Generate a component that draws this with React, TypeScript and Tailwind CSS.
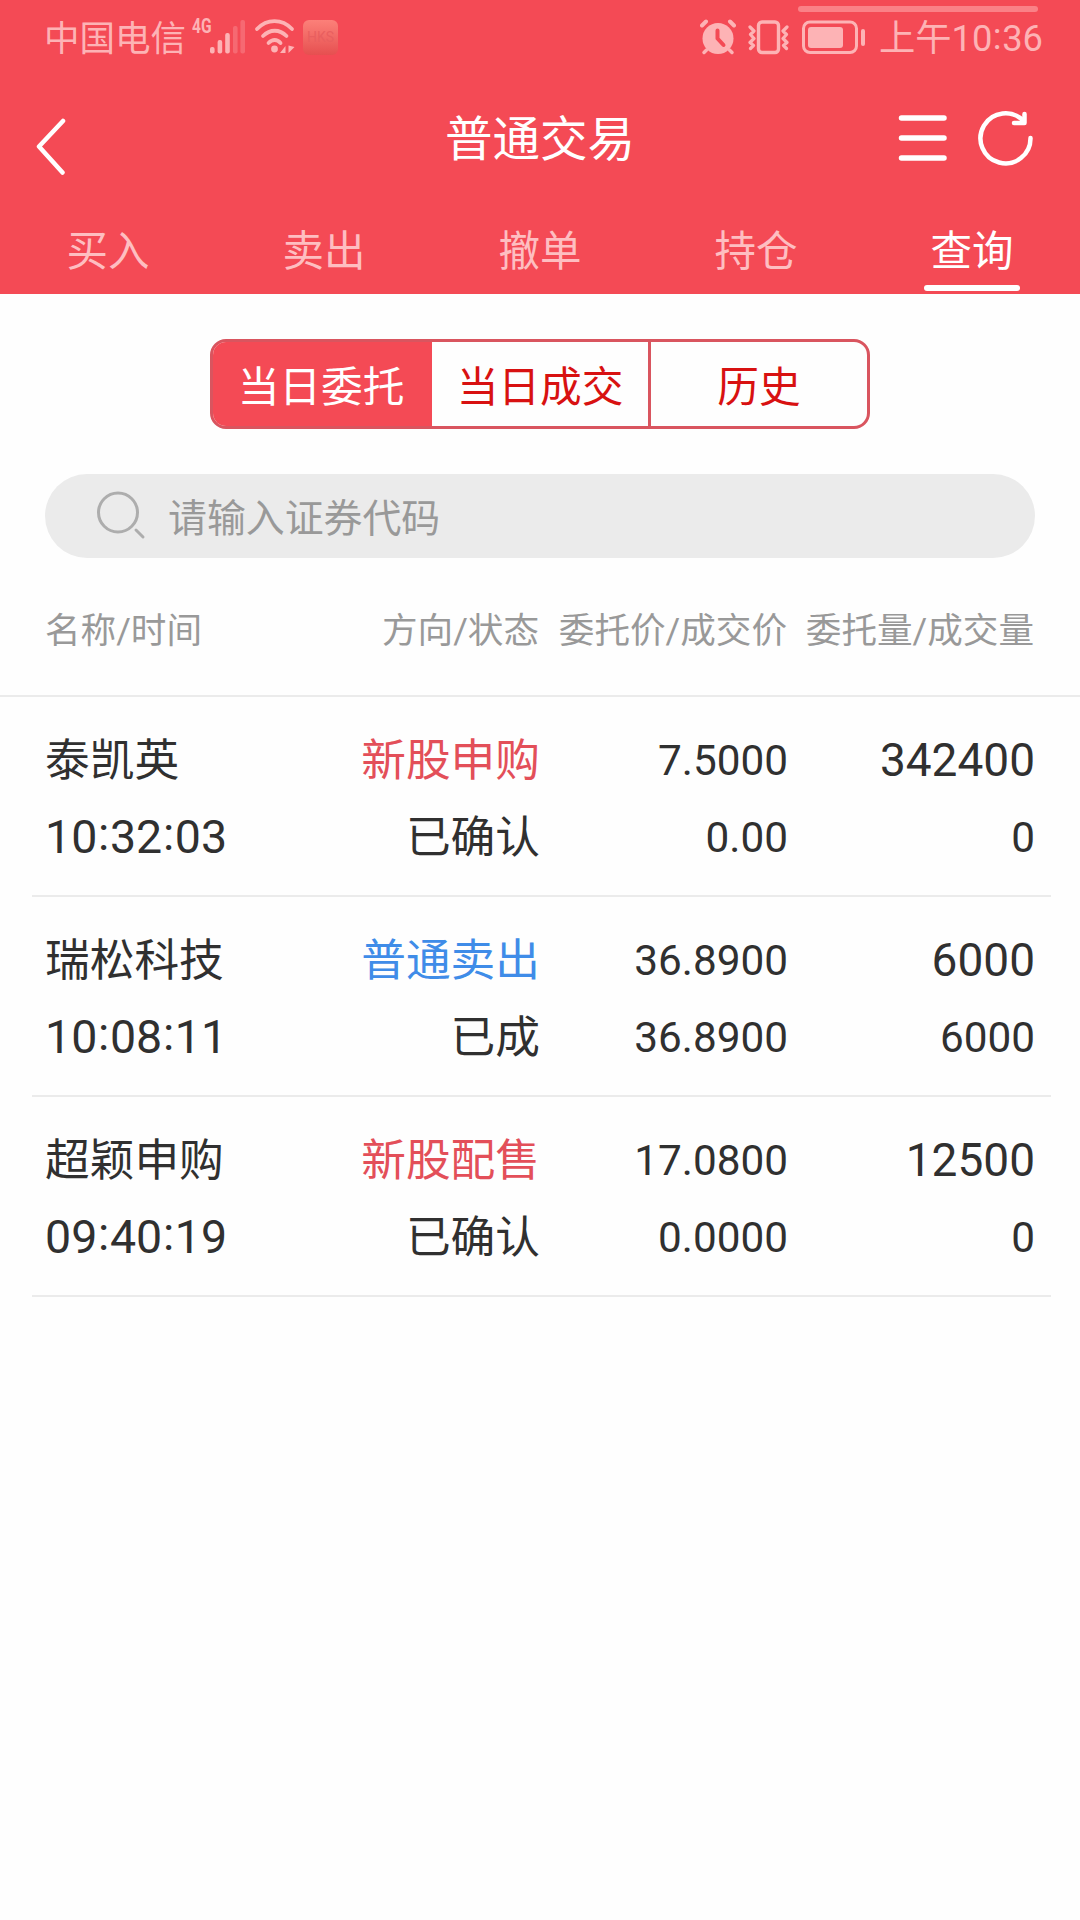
import React, { useState } from 'react';

interface Order {
  id: number;
  name: string;
  time: string;
  side: string;
  sideType: 'buy' | 'sell';
  status: string;
  orderPrice: string;
  dealPrice: string;
  orderQty: string;
  dealQty: string;
}

const tabs = ['买入', '卖出', '撤单', '持仓', '查询'];
const segments = ['当日委托', '当日成交', '历史'];

const orders: Order[] = [
  {
    id: 1, name: '泰凯英', time: '10:32:03', side: '新股申购', sideType: 'buy', status: '已确认',
    orderPrice: '7.5000', dealPrice: '0.00', orderQty: '342400', dealQty: '0',
  },
  {
    id: 2, name: '瑞松科技', time: '10:08:11', side: '普通卖出', sideType: 'sell', status: '已成',
    orderPrice: '36.8900', dealPrice: '36.8900', orderQty: '6000', dealQty: '6000',
  },
  {
    id: 3, name: '超颖申购', time: '09:40:19', side: '新股配售', sideType: 'buy', status: '已确认',
    orderPrice: '17.0800', dealPrice: '0.0000', orderQty: '12500', dealQty: '0',
  },
];

// colons sit a little high between the digits
const Time = ({ value }: { value: string }) => (
  <>
    {value.split(':').map((part, i) => (
      <React.Fragment key={i}>
        {i > 0 && <span className="inline-block -translate-y-[0.06em] px-[0.015em]">:</span>}
        {part}
      </React.Fragment>
    ))}
  </>
);

const StatusBar = () => (
  <div className="relative flex h-[74px] items-center justify-between pl-[44px] pr-[37px] text-[#fdb3b5]">
    <div className="absolute left-[798px] top-[6px] h-[6px] w-[240px] rounded-full bg-[#fa8187]" />
    <div className="flex items-center">
      <span className="w-[143px] whitespace-nowrap pt-[3px] text-[35.5px] leading-[74px]">中国电信</span>
      <span className="mb-[21px] ml-[5px] w-[18px] origin-left scale-x-[0.74] text-[21px] font-bold leading-none">4G</span>
      <svg width="36" height="34" viewBox="0 0 36 34" fill="currentColor">
        <rect x="0" y="27" width="4.6" height="6.5" rx="2" />
        <rect x="7.6" y="20" width="4.6" height="13.5" rx="2" />
        <rect x="15.2" y="13" width="4.6" height="20.5" rx="2" />
        <rect x="23" y="6" width="4.6" height="27.5" rx="2" opacity="0.3" />
        <rect x="30.4" y="0" width="4.6" height="33.5" rx="2" opacity="0.3" />
      </svg>
      <svg className="ml-[8px]" width="42" height="36" viewBox="0 0 42 36" fill="none" stroke="currentColor" strokeWidth="3.8" strokeLinecap="round">
        <path d="M3 10C13-0.500 28-0.500 38 10" />
        <path d="M9 17c7-7 16.500-7 23.500 0" />
        <path d="M14.500 24c4-4 8.500-4 12 0" />
        <circle cx="20.500" cy="30" r="3.400" fill="currentColor" stroke="none" />
        <path d="M31.500 27v7h-5.500zM34.500 26.500l6 1.500-6 6z" fill="currentColor" stroke="none" />
      </svg>
      <span className="ml-[7px] flex h-[35px] w-[35px] items-center justify-center rounded-[6px] bg-gradient-to-b from-[#fc8079] to-[#e64f50] text-[14px] leading-none text-[#e95f5f]">
        HKS
      </span>
    </div>
    <div className="flex items-center">
      <svg width="36" height="36" viewBox="0 0 36 36" fill="none" stroke="currentColor" strokeLinecap="round">
        <circle cx="18" cy="19.500" r="15.500" fill="currentColor" stroke="none" />
        <path d="M2 6.500l4-4M30 2.500l4 4" strokeWidth="4" />
        <path d="M6.500 31l-2.500 2.500M29.500 31l2.500 2.500" strokeWidth="3.500" />
        <path d="M17.500 11.500v8l6 6.500" stroke="#f44a55" strokeWidth="4" strokeLinejoin="round" />
      </svg>
      <svg className="ml-[11px]" width="43" height="36" viewBox="0 0 43 36" fill="none" stroke="currentColor" strokeWidth="3.400" strokeLinecap="round" strokeLinejoin="round">
        <rect x="11.500" y="3" width="20" height="30.500" rx="3.500" />
        <path d="M3 8l4 4-3.500 3.500 3.500 4-4 4 3.500 3-3 3M40 8l-4 4 3.500 3.500-3.500 4 4 4-3.500 3 3 3" strokeWidth="3.200" />
      </svg>
      <svg className="ml-[12px]" width="64" height="36" viewBox="0 0 64 36" fill="none">
        <rect x="1.500" y="3" width="53" height="30.500" rx="6.500" stroke="currentColor" strokeWidth="3" />
        <rect x="6" y="8" width="35" height="21" rx="3" fill="currentColor" />
        <rect x="59" y="10" width="4" height="17" rx="2" fill="currentColor" />
      </svg>
      <span className="ml-[13px] whitespace-nowrap pt-[3px] text-[36.300px] leading-[74px]">上午<Time value="10:36" /></span>
    </div>
  </div>
);

const Header = ({ active, onSelect }: { active: string; onSelect: (tab: string) => void }) => (
  <header className="h-[294px] bg-[#f44a55]">
    <StatusBar />
    <div className="grid h-[128px] grid-cols-[1fr_auto_1fr] items-center">
      <button className="pl-[36px] pt-[17px] text-white">
        <svg width="30" height="58" viewBox="0 0 30 58" fill="none" stroke="currentColor" strokeWidth="4.500" strokeLinecap="round" strokeLinejoin="round">
          <path d="M27 3L3 28.500l23.500 26" />
        </svg>
      </button>
      <h1 className="h-[128px] text-[47.500px] leading-[133px] text-white">普通交易</h1>
      <div className="flex items-center justify-end pr-[46px] text-white">
        <svg width="50" height="56" viewBox="0 0 50 56" stroke="currentColor" strokeWidth="5.500" strokeLinecap="round">
          <path d="M3.500 8h42.500M3.500 28h42.500M3.500 48h42.500" />
        </svg>
        <svg className="ml-[30px]" width="56" height="56" viewBox="0 0 56 56" fill="none" stroke="currentColor" strokeWidth="4.500" strokeLinecap="round" strokeLinejoin="round">
          <path d="M52.500 28A25 25 0 1 1 45.500 11" />
          <path d="M46.500 4v9H36" />
        </svg>
      </div>
    </div>
    <nav className="grid h-[92px] grid-cols-5">
      {tabs.map((tab) => (
        <button
          key={tab}
          onClick={() => onSelect(tab)}
          className={`relative h-[92px] pt-[8px] text-[41.500px] leading-[84px] ${active === tab ? 'text-white' : 'text-[#febec1]'}`}
        >
          <span className="flex h-[84px] items-center justify-center">{tab}</span>
          {active === tab && (
            <span className="absolute bottom-[3px] left-[60px] h-[6px] w-[96px] rounded-full bg-white" />
          )}
        </button>
      ))}
    </nav>
  </header>
);

const OrderRow = ({ order }: { order: Order }) => (
  <div className="ml-[32px] mr-[29px] h-[200px] border-b-2 border-[#ebebeb] pl-[13px] pt-[25px] text-[#303030]">
    <div className="grid h-[77px] grid-cols-[248px_247px_248px_247px] leading-[77px] text-right text-[44.700px]">
      <span className="pt-[1px] text-left">{order.name}</span>
      <span className={`pt-[1px] ${order.sideType === 'buy' ? 'text-[#e34f59]' : 'text-[#3f8ce8]'}`}>{order.side}</span>
      <span className="text-[42.300px]">{order.orderPrice}</span>
      <span className="text-[46px]">{order.orderQty}</span>
    </div>
    <div className="grid h-[77px] grid-cols-[248px_247px_248px_247px] leading-[77px] text-right text-[44.700px]">
      <span className="text-left text-[46.500px]"><Time value={order.time} /></span>
      <span className="pt-[1px]">{order.status}</span>
      <span className="text-[42.300px]">{order.dealPrice}</span>
      <span className="text-[42.300px]">{order.dealQty}</span>
    </div>
  </div>
);

const App: React.FC = () => {
  const [activeTab, setActiveTab] = useState('查询');
  const [segment, setSegment] = useState('当日委托');

  return (
    <div className="h-[1920px] w-[1080px] overflow-hidden bg-[#fefefe] font-['Roboto','Noto_Sans_CJK_SC',sans-serif]">
      <Header active={activeTab} onSelect={setActiveTab} />

      <div className="mx-auto mt-[45px] grid h-[90px] w-[660px] grid-cols-[219px_216px_219px] overflow-hidden rounded-[16px] border-[3px] border-[#d9555f]">
        {segments.map((item, i) => (
          <button
            key={item}
            onClick={() => setSegment(item)}
            className={`h-[84px] pt-[8px] text-[41.700px] leading-[76px] ${i === 0 ? 'pr-[3px]' : ''} ${i === 2 ? 'border-l-[3px] border-[#d9555f]' : ''} ${segment === item ? 'bg-[#f44a55] text-white' : 'text-[#d81111]'}`}
          >
            <span className="flex h-[76px] items-center justify-center">{item}</span>
          </button>
        ))}
      </div>

      <div className="mx-[45px] mt-[45px] flex h-[84px] items-center rounded-full bg-[#ebebeb] pl-[50px]">
        <svg width="52" height="52" viewBox="0 0 52 52" fill="none" stroke="#adadad" strokeWidth="3" strokeLinecap="round">
          <circle cx="23" cy="22.500" r="19.500" />
          <path d="M41 40l7 7" />
        </svg>
        <span className="ml-[21px] pt-[5px] text-[38.900px] leading-[84px] text-[#999]">请输入证券代码</span>
      </div>

      <div className="grid h-[139px] grid-cols-[247px_247px_248px_247px] border-b-2 border-[#ebebeb] px-[45px] text-right text-[35.600px] leading-[146px] text-[#999]">
        <span className="text-left">名称/时间</span>
        <span>方向/状态</span>
        <span>委托价/成交价</span>
        <span>委托量/成交量</span>
      </div>

      {orders.map((order) => (
        <OrderRow key={order.id} order={order} />
      ))}
    </div>
  );
};

export default App;
